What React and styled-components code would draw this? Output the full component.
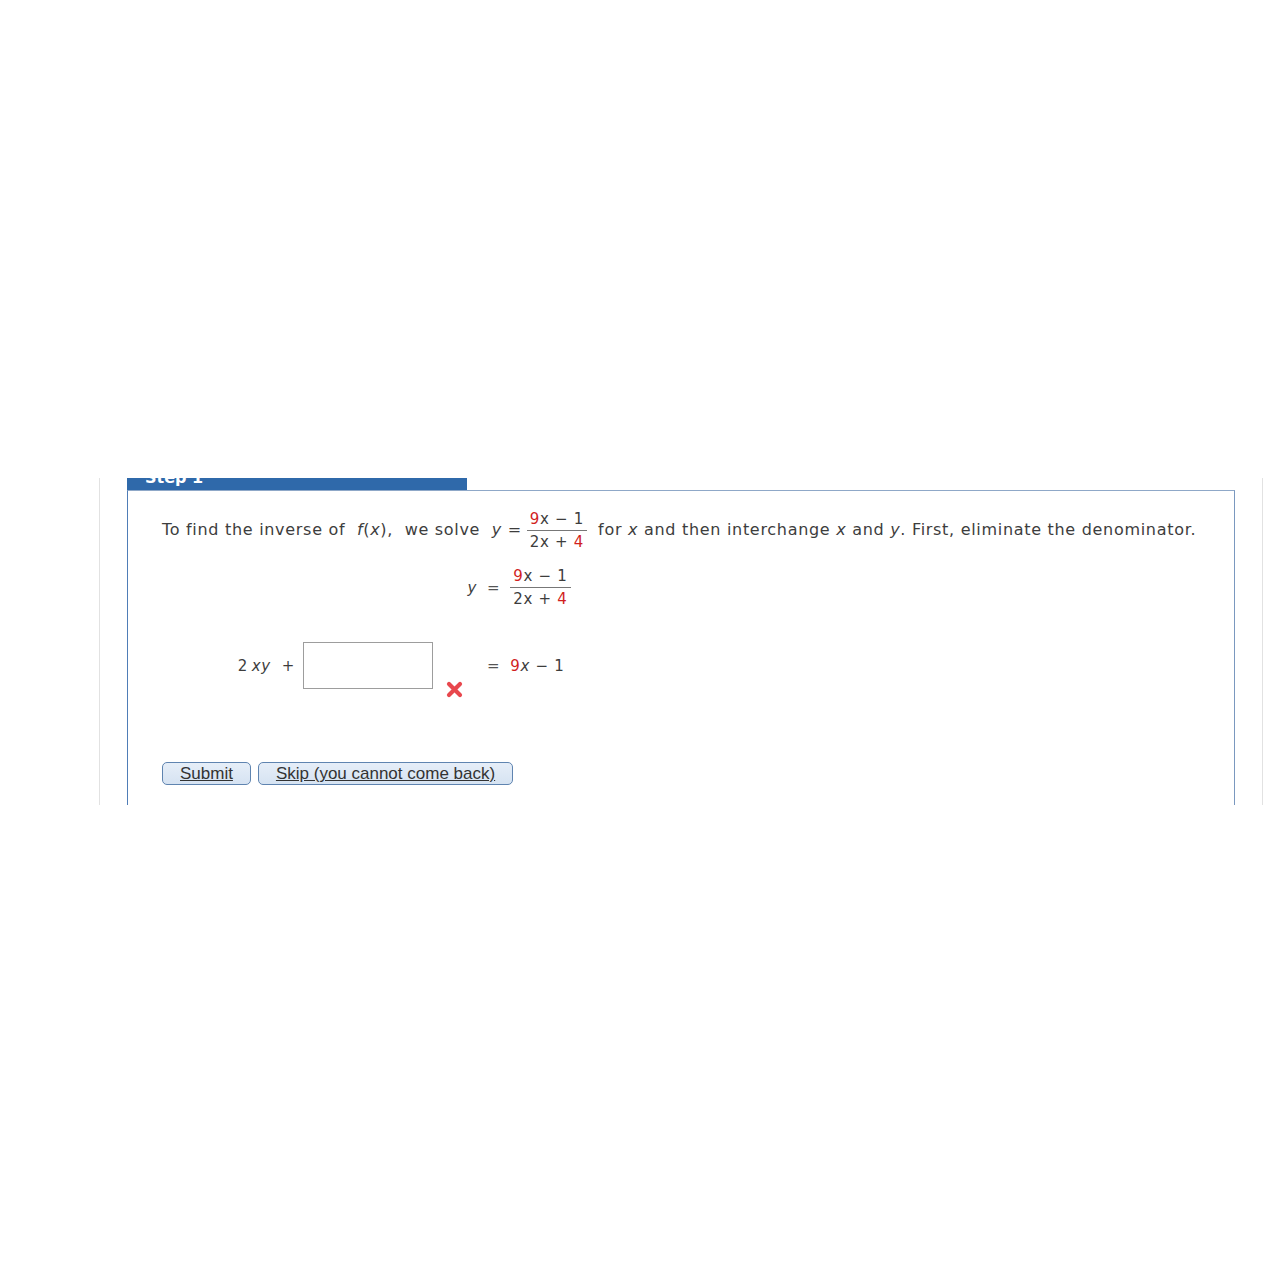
import React from "react";
import styled, { createGlobalStyle } from "styled-components";

const GlobalStyle = createGlobalStyle`
  html, body { margin: 0; padding: 0; background: #fff; }
  body { font-family: "DejaVu Sans", Verdana, sans-serif; color: #3d3d3d; }
`;

const Page = styled.div`
  height: 1284px;
  padding-top: 478px;
  box-sizing: border-box;
`;

const Frame = styled.div`
  margin-left: 99px;
  width: 1164px;
  height: 327px;
  border-left: 1px solid #e2e2e2;
  border-right: 1px solid #e2e2e2;
  padding: 0 27px;
  box-sizing: border-box;
  overflow: hidden;
`;

const Tab = styled.div`
  width: 340px;
  height: 12px;
  background: #2f69aa;
  overflow: hidden;
  padding-left: 18px;
  box-sizing: border-box;
`;

const TabLabel = styled.div`
  color: #fff;
  font-weight: bold;
  font-size: 16px;
  line-height: 16px;
  margin-top: -8px;
`;

const StepBox = styled.div`
  height: 400px;
  border-top: 1px solid #8fa8c8;
  border-left: 1px solid #4f7db7;
  border-right: 1px solid #7a98bf;
  padding: 17px 34px 0;
  box-sizing: border-box;
  letter-spacing: 0.7px;
`;

const Intro = styled.p`
  margin: 0;
  font-size: 16px;
  line-height: 44px;
  white-space: nowrap;
`;

const I = styled.i`
  font-style: italic;
`;

const Red = styled.span`
  color: #d11f1f;
`;

const Frac = styled.span`
  display: inline-flex;
  flex-direction: column;
  align-items: center;
  vertical-align: middle;
  font-size: 15px;
  line-height: 20px;
  margin: 0 ${(p) => p.$right || 0}px 0 ${(p) => p.$left || 0}px;
`;

const Num = styled.span`
  border-bottom: 1px solid #777;
  padding: 0 3px 1px;
`;

const Den = styled.span`
  padding: 1px 3px 0;
`;

const EqGrid = styled.div`
  display: grid;
  grid-template-columns: 240px auto auto;
  justify-content: start;
  column-gap: 10px;
  row-gap: 33px;
  align-items: center;
  margin: 14px 0 0 75px;
  font-size: 15px;
`;

const Left = styled.div`
  display: flex;
  align-items: center;
  justify-content: flex-end;
  padding-right: ${(p) => p.$pad || 0}px;
`;

const Term = styled.span`
  white-space: nowrap;
`;

const Eq = styled.span`
  color: #555;
`;

const Right = styled.div`
  display: flex;
  align-items: center;
  white-space: nowrap;
`;

const AnswerInput = styled.input`
  width: 130px;
  height: 47px;
  box-sizing: border-box;
  border: 1px solid #9d9d9d;
  margin: 0 0 0 8px;
  font: inherit;
`;

const Wrong = styled.svg`
  width: 17px;
  height: 17px;
  margin: 0 0 0 13px;
  align-self: flex-end;
  margin-bottom: -9px;
`;

const Buttons = styled.div`
  display: flex;
  gap: 7px;
  margin-top: 73px;
  letter-spacing: 0;
`;

const Button = styled.button`
  height: 23px;
  padding: 0 ${(p) => p.$pad}px;
  border: 1px solid #5f84b0;
  border-radius: 5px;
  background: linear-gradient(#e6eef8, #d6e3f2);
  color: #333;
  font-family: "Liberation Sans", Arial, sans-serif;
  font-size: 17px;
  line-height: 21px;
  text-decoration: underline;
  cursor: pointer;
`;

export default function App() {
  return (
    <>
      <GlobalStyle />
      <Page>
        <Frame>
          <Tab>
            <TabLabel>Step 1</TabLabel>
          </Tab>
          <StepBox>
            <Intro>
              To find the inverse of&nbsp; <I>f</I>(<I>x</I>),&nbsp; we solve&nbsp; <I>y</I> =
              <Frac $left={5} $right={11}>
                <Num>
                  <Red>9</Red>x − 1
                </Num>
                <Den>
                  2x + <Red>4</Red>
                </Den>
              </Frac>
              for <I>x</I> and then interchange <I>x</I> and <I>y</I>. First, eliminate the denominator.
            </Intro>
            <EqGrid>
              <Left>
                <I>y</I>
              </Left>
              <Eq>=</Eq>
              <Right>
                <Frac>
                  <Num>
                    <Red>9</Red>x − 1
                  </Num>
                  <Den>
                    2x + <Red>4</Red>
                  </Den>
                </Frac>
              </Right>
              <Left $pad={14}>
                <Term>
                  2&thinsp;<I>xy</I>&nbsp; +
                </Term>
                <AnswerInput type="text" />
                <Wrong viewBox="0 0 17 17">
                  <path d="M3 3 L14 14 M14 3 L3 14" stroke="#e8474d" strokeWidth="4.2" strokeLinecap="round" />
                </Wrong>
              </Left>
              <Eq>=</Eq>
              <Right>
                <Red>9</Red>
                <I>x</I>&nbsp;−&nbsp;1
              </Right>
            </EqGrid>
            <Buttons>
              <Button $pad={17}>Submit</Button>
              <Button $pad={17}>Skip (you cannot come back)</Button>
            </Buttons>
          </StepBox>
        </Frame>
      </Page>
    </>
  );
}
